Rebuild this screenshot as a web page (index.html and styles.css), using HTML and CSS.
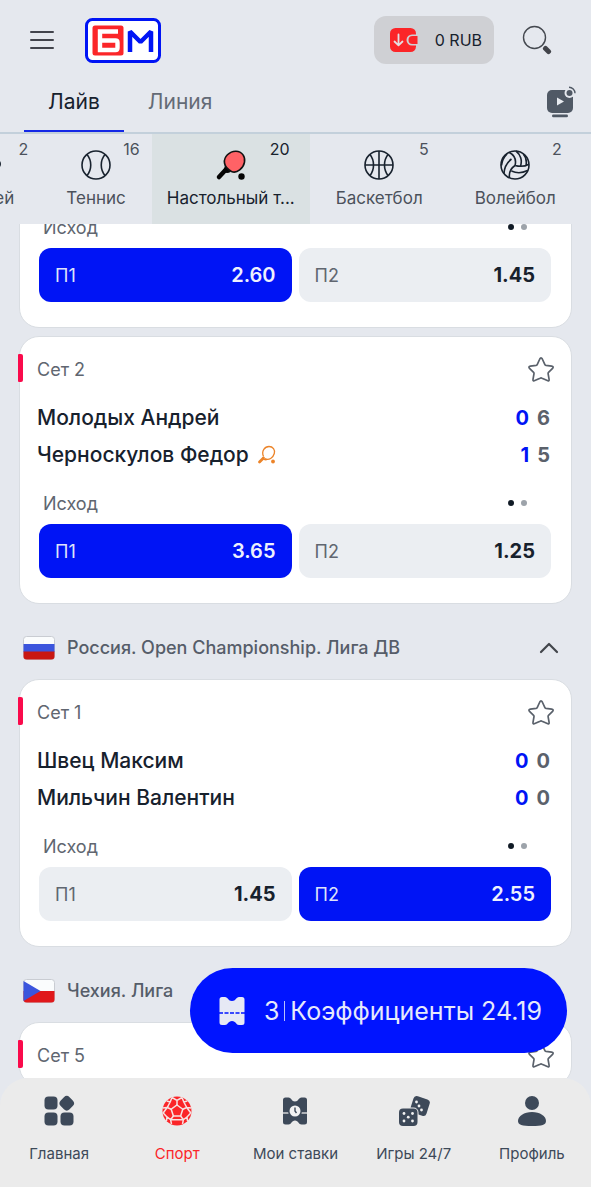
FILE: index.html
```html
<!DOCTYPE html>
<html lang="ru">
<head>
<meta charset="utf-8">
<meta name="viewport" content="width=device-width, initial-scale=1">
<title>Лайв</title>
<link rel="stylesheet" href="styles.css">
</head>
<body>
<svg class="sprite" aria-hidden="true">
  <symbol id="star" viewBox="0 0 28 28"><path d="M14 1.900c.7 0 1 .5 1.300 1.100l2.600 5.600c.2.500.6.7 1.100.8l5.700.7c1.500.2 1.900 1.200.9 2.200l-4.100 4c-.4.400-.5.8-.4 1.300l1 5.700c.2 1.500-.6 2-1.800 1.300l-5.300-2.400c-.6-.3-1.300-.3-1.900 0l-5.300 2.400c-1.200.7-2 .2-1.800-1.300l1-5.700c.1-.5 0-.9-.4-1.300l-4.100-4c-1-1-.6-2 .9-2.200l5.700-.7c.5-.1.900-.3 1.100-.8l2.600-5.600c.3-.6.6-1.100 1.200-1.100z" fill="none" stroke="#5a616b" stroke-width="1.700" stroke-linejoin="round"/></symbol>
</svg>
<div class="app">
  <header class="header">
    <div class="topbar">
      <button class="icon-button" aria-label="Меню">
        <svg width="26" height="20" viewBox="0 0 26 20"><path d="M2 2h22M2 10h22M2 18h22" stroke="#42444c" stroke-width="2" stroke-linecap="round"/></svg>
      </button>
      <a class="logo" href="#" aria-label="БМ">
        <svg width="76" height="45" viewBox="0 0 76 45">
          <rect x="1.500" y="1.500" width="73" height="42" rx="6" fill="#fff" stroke="#0014f5" stroke-width="3"/>
          <rect x="7.500" y="7.500" width="31" height="30" rx="2.500" fill="#fb2629"/>
          <path d="M33 13.500H15v18.500h15.500q2 0 2-2v-5.500q0-2-2-2H17" fill="none" stroke="#fff" stroke-width="4.400"/>
          <path d="M45 34V13.500L55.500 24 66 13.500V34" fill="none" stroke="#0014f5" stroke-width="4.500" stroke-linejoin="bevel"/>
        </svg>
      </a>
      <button class="balance">
        <svg width="28" height="26" viewBox="0 0 28 26">
          <rect x="0" y="1" width="26" height="24" rx="5.500" fill="#fb2528"/>
          <path d="M28 7.500h-6a5 5 0 0 0 0 11h6z" fill="#cfd0d4"/>
          <path d="M27.500 9h-5a4 4 0 0 0 0 8h5z" fill="#fb2528"/>
          <path d="M8.500 7.500v10.500M4.500 14.500l4 3.800 4-3.800" fill="none" stroke="#e3dfe3" stroke-width="1.800" stroke-linecap="round" stroke-linejoin="round"/>
        </svg>
        <span>0 RUB</span>
      </button>
      <button class="icon-button search" aria-label="Поиск">
        <svg width="30" height="30" viewBox="0 0 30 30"><circle cx="12.500" cy="12.500" r="11" fill="none" stroke="#454950" stroke-width="1.400"/><path d="M23.500 23.500l3 3" stroke="#42444a" stroke-width="5" stroke-linecap="round"/></svg>
      </button>
    </div>
    <nav class="tabs">
      <a class="tab tab-active" href="#">Лайв</a>
      <a class="tab" href="#">Линия</a>
      <button class="icon-button stream" aria-label="Трансляции">
        <svg width="30" height="32" viewBox="0 0 30 32">
          <rect x="1" y="4" width="26" height="23" rx="5" fill="#505965"/>
          <path d="M11 11.500l7 4-7 4z" fill="#e8ebf0"/>
          <rect x="6" y="28.500" width="16" height="2.800" rx="1.400" fill="#505965"/>
          <circle cx="23.500" cy="7" r="5" fill="#e5e8ee"/>
          <circle cx="23.500" cy="7" r="3" fill="#505965"/>
          <path d="M23 1.200a6 6 0 0 1 6 6" fill="none" stroke="#505965" stroke-width="1.400"/>
        </svg>
      </button>
    </nav>
  </header>

  <nav class="sports">
    <a class="sport sport-compact" href="#"><span class="count">2</span>
      <svg width="32" height="32" viewBox="0 0 32 32"><circle cx="27" cy="15" r="5" fill="#18222e"/></svg>
      <span>Хоккей</span></a>
    <a class="sport sport-compact" href="#"><span class="count">16</span>
      <svg width="32" height="32" viewBox="0 0 32 32"><g fill="none" stroke="#18222e" stroke-width="1.600"><circle cx="16" cy="16" r="14"/><path d="M7 5.500c5 6 5 15 0 21M25 5.500c-5 6-5 15 0 21"/></g></svg>
      <span>Теннис</span></a>
    <a class="sport sport-active" href="#"><span class="count">20</span>
      <svg width="32" height="32" viewBox="0 0 32 32"><path d="M4 28l7-7.500" stroke="#050505" stroke-width="4.500" stroke-linecap="round"/><path d="M10 15.500c0 4-2 4.500-1.500 6.500 1 2.300 4.500 2.300 7 1z" fill="#050505"/><path d="M9.500 14c-1-6 5-12 11.500-11.800 6 .2 9.500 5.300 8.500 11C28.500 19 22 25 16.500 22.500 12.500 20.500 10.200 18 9.500 14z" fill="#ff6266" stroke="#111" stroke-width="1.600"/><circle cx="26.500" cy="27.500" r="3.200" fill="#050505"/></svg>
      <span>Настольный т...</span></a>
    <a class="sport" href="#"><span class="count">5</span>
      <svg width="32" height="32" viewBox="0 0 32 32"><g fill="none" stroke="#18222e" stroke-width="1.600"><circle cx="16" cy="16" r="14"/><path d="M2 16h28M16 2v28M7 5.500c4.700 6 4.700 15 0 21M25 5.500c-4.700 6-4.700 15 0 21"/></g></svg>
      <span>Баскетбол</span></a>
    <a class="sport" href="#"><span class="count">2</span>
      <svg width="32" height="32" viewBox="0 0 32 32"><g fill="none" stroke="#18222e" stroke-width="1.600"><circle cx="16" cy="16" r="14"/><path d="M16 16.500C17.500 11 15 6 10 3.300M21.500 17c2-5.500 0-11.500-4.500-15M27 16.500c.8-4.500 0-8.500-2.700-11.500M16 16.500c5 1.300 10 1 13.800-1.300M12.500 22c5 2.300 11 2 16-.5M16 16.500c-4.500 3-6.200 7.500-5.500 12.300M12.500 10c-4.500 3.500-7.300 8.500-7.500 14.500M8 5c-3 3-5 7-5.500 11.500"/></g></svg>
      <span>Волейбол</span></a>
  </nav>

  <main class="feed">
    <article class="card card-scrolled">
      <section class="market">
        <div class="market-head"><h4>Исход</h4><span class="dots"><i></i><i></i></span></div>
        <div class="odds">
          <button class="odd odd-picked"><span>П1</span><b>2.60</b></button>
          <button class="odd"><span>П2</span><b>1.45</b></button>
        </div>
      </section>
    </article>

    <article class="card">
      <span class="live-mark"></span>
      <div class="card-head"><span>Сет 2</span><button class="icon-button" aria-label="В избранное"><svg width="28" height="28"><use href="#star"/></svg></button></div>
      <div class="players">
        <div class="player"><h3>Молодых Андрей</h3><span class="score"><b>0</b><b>6</b></span></div>
        <div class="player"><h3>Черноскулов Федор</h3>
          <svg width="20" height="20" viewBox="0 0 20 20"><path d="M2.500 17l4-4" stroke="#ec8429" stroke-width="2.800" stroke-linecap="round"/><path d="M5.500 12.500c1 2 2.500 2.500 4 2.300M6.500 11.500C4 6 8 1.500 12 1.500s6.300 3.500 5.300 7c-1.300 4.500-5.300 7-9.300 5.200" fill="none" stroke="#ec8429" stroke-width="1.300"/><circle cx="16" cy="16.500" r="1.900" fill="#ec8429"/></svg>
          <span class="score"><b>1</b><b>5</b></span></div>
      </div>
      <section class="market">
        <div class="market-head"><h4>Исход</h4><span class="dots"><i></i><i></i></span></div>
        <div class="odds">
          <button class="odd odd-picked"><span>П1</span><b>3.65</b></button>
          <button class="odd"><span>П2</span><b>1.25</b></button>
        </div>
      </section>
    </article>

    <header class="league">
      <svg width="32" height="24" viewBox="0 0 32 24"><rect x=".5" y=".5" width="31" height="23" rx="3" fill="#fafcfd" stroke="#c9ccd2"/><path d="M.5 8h31v8H.5z" fill="#3b55dd"/><path d="M.5 15.500h31v5q0 3-3 3h-25q-3 0-3-3z" fill="#c91712"/></svg>
      <h2>Россия. Open Championship. Лига ДВ</h2>
      <button class="icon-button" aria-label="Свернуть"><svg width="20" height="14" viewBox="0 0 20 14"><path d="M2 11l8-8 8 8" fill="none" stroke="#42454b" stroke-width="2.200" stroke-linecap="round" stroke-linejoin="round"/></svg></button>
    </header>

    <article class="card">
      <span class="live-mark"></span>
      <div class="card-head"><span>Сет 1</span><button class="icon-button" aria-label="В избранное"><svg width="28" height="28"><use href="#star"/></svg></button></div>
      <div class="players">
        <div class="player"><h3>Швец Максим</h3><span class="score"><b>0</b><b>0</b></span></div>
        <div class="player"><h3>Мильчин Валентин</h3><span class="score"><b>0</b><b>0</b></span></div>
      </div>
      <section class="market">
        <div class="market-head"><h4>Исход</h4><span class="dots"><i></i><i></i></span></div>
        <div class="odds">
          <button class="odd"><span>П1</span><b>1.45</b></button>
          <button class="odd odd-picked"><span>П2</span><b>2.55</b></button>
        </div>
      </section>
    </article>

    <header class="league">
      <svg width="32" height="24" viewBox="0 0 32 24"><rect x=".5" y=".5" width="31" height="23" rx="3" fill="#fafcfd" stroke="#c9ccd2"/><path d="M.5 12h31v8.500q0 3-3 3h-25q-3 0-3-3z" fill="#e0181b"/><path d="M.5 2l17 10-17 10z" fill="#3b55dd"/></svg>
      <h2>Чехия. Лига</h2>
    </header>

    <article class="card">
      <span class="live-mark"></span>
      <div class="card-head"><span>Сет 5</span><button class="icon-button" aria-label="В избранное"><svg width="28" height="28"><use href="#star"/></svg></button></div>
      <div class="players"></div>
    </article>
  </main>

  <footer class="bottom">
    <button class="betslip">
      <svg width="26" height="30" viewBox="0 0 26 30"><path d="M3 1h3c3 0 3 4 7 4s4-4 7-4h3q2.500 0 2.500 2.500v23q0 2.500-2.500 2.500h-3c-3 0-3-4-7-4s-4 4-7 4H3Q.5 29 .5 26.500v-23Q.5 1 3 1z" fill="#e6e9f5"/><path d="M0 17h26" stroke="#0014ff" stroke-width="1.400" stroke-dasharray="4 1.500"/></svg>
      <span class="betslip-text"><span>3</span><i></i><span>Коэффициенты 24.19</span></span>
    </button>
    <nav class="bottom-nav">
      <a class="nav-item" href="#">
        <svg width="32" height="32" viewBox="0 0 32 32" fill="#3d4959"><rect x="1.500" y="1.500" width="13" height="13" rx="4"/><rect x="1.500" y="17.500" width="13" height="13" rx="4"/><rect x="17.500" y="17.500" width="13" height="13" rx="4"/><rect x="17.500" y="2" width="12.500" height="12.500" rx="4" transform="rotate(45 23.750 8.250)"/></svg>
        <span>Главная</span></a>
      <a class="nav-item nav-active" href="#">
        <svg width="32" height="32" viewBox="0 0 32 32"><circle cx="16" cy="16" r="14.500" fill="#fb2528"/><g stroke="#f6e2e2" stroke-width="1.500" fill="none"><path d="M16 10l5.800 4.200-2.200 6.800h-7.200l-2.200-6.800z"/><path d="M16 10V5.500M21.800 14.200l4-1.700M19.600 21l2.800 3.700M12.400 21l-2.800 3.700M10.200 14.200l-4-1.700M11 2.500l5 3 5-3M21 2.500l1.800 4.500 3 5.500 4.500.5M22.800 7l3.500-1M29.800 18l-4-5.500M26.500 26l-.5-4 3.800-4M26 22l-3.600 2.700L21.500 29M22.400 24.700H9.600L10.500 29M9.600 24.700L6 22l-.5 4M6 22l-3.800-4 4-5.500-4.500.5M6.200 12.500l3-5.500L11 2.500M9.200 7L5.700 6"/></g></svg>
        <span>Спорт</span></a>
      <a class="nav-item" href="#">
        <svg width="32" height="32" viewBox="0 0 32 32"><path d="M6.500 2.500h3c3 0 3 4 6.500 4s3.500-4 6.500-4h3q2.500 0 2.500 2.500v22q0 2.500-2.500 2.500h-3c-3 0-3-4-6.500-4s-3.500 4-6.500 4h-3Q4 29.500 4 27V5q0-2.500 2.500-2.500z" fill="#3d4959"/><path d="M3 18h26" stroke="#ebebeb" stroke-width="1.300"/><circle cx="16" cy="16" r="7" fill="#3d4959"/><circle cx="16" cy="16" r="5.500" fill="#f2f2f2"/><path d="M16 12.500V16l1.500 2" stroke="#3d4959" stroke-width="1.400" fill="none"/></svg>
        <span>Мои ставки</span></a>
      <a class="nav-item" href="#">
        <svg width="32" height="32" viewBox="0 0 32 32"><rect x="13.500" y="2.500" width="17" height="17" rx="3.500" fill="#3d4959" transform="rotate(18 22 11)"/><g fill="#f2f2f2"><circle cx="18.500" cy="7" r="1.400"/><circle cx="21" cy="11" r="1.400"/><circle cx="23.500" cy="15" r="1.400"/></g><rect x="0" y="12.500" width="20.500" height="20" rx="5" fill="#ebebeb"/><rect x="1" y="13.500" width="18.500" height="17.500" rx="4" fill="#3d4959"/><g fill="#f2f2f2"><circle cx="6" cy="18.500" r="1.400"/><circle cx="14.500" cy="18.500" r="1.400"/><circle cx="10.250" cy="22.200" r="1.400"/><circle cx="6" cy="26" r="1.400"/><circle cx="14.500" cy="26" r="1.400"/></g></svg>
        <span>Игры 24/7</span></a>
      <a class="nav-item" href="#">
        <svg width="32" height="32" viewBox="0 0 32 32" fill="#3d4959"><circle cx="16" cy="8" r="7"/><path d="M16 17c8 0 14 4 14 9 0 4-4 5-14 5S2 30 2 26c0-5 6-9 14-9z"/></svg>
        <span>Профиль</span></a>
    </nav>
  </footer>
</div>
</body>
</html>
```
FILE: styles.css
```css
* { box-sizing: border-box; }

body {
  margin: 0;
  background: #e5e8ee;
  color: #17212d;
  font-family: Inter, "Noto Sans", sans-serif;
  font-size: 18px;
}

h2, h3, h4 { margin: 0; }
a { color: inherit; text-decoration: none; }
button { border: 0; padding: 0; color: inherit; font: inherit; cursor: pointer; }
svg { display: block; flex: none; }
.sprite { display: none; }
.icon-button { background: none; }

.app {
  display: flex;
  flex-direction: column;
  height: 100vh;
  overflow: hidden;
}

/* Header */
.header { border-bottom: 2px solid #c3d0db; }

.topbar {
  display: flex;
  align-items: center;
  height: 80px;
  padding: 0 39px 0 29px;
}

.logo { margin-left: 30px; }

.balance {
  display: flex;
  align-items: center;
  justify-content: space-between;
  gap: 17px;
  height: 48px;
  margin-left: auto;
  padding: 0 12px 0 16px;
  border-radius: 12px;
  background: #cfd0d4;
  font-size: 16px;
}

.search { margin-left: 28px; }

.tabs {
  display: flex;
  height: 52px;
  padding: 0 15px 0 24px;
}

.tab {
  padding: 8px 24px 0;
  border-bottom: 2px solid transparent;
  color: #646b76;
  font-size: 21px;
  line-height: 28px;
}

.tab-active { border-color: #1428e6; color: #17212d; }
.stream { margin: 6px 0 14px auto; }

/* Sport strip, scrolled to the selected sport */
.sports {
  display: flex;
  flex: none;
  height: 90px;
  margin-left: -71px;
}

.sport {
  position: relative;
  display: flex;
  flex: none;
  flex-direction: column;
  align-items: center;
  gap: 6px;
  padding: 15px 26px 0;
  color: #4b515b;
  font-size: 17px;
  line-height: 22px;
}

.sport-active { padding: 15px 15px 0; background: #dae1e3; color: #17212d; }
.count { position: absolute; top: 4px; right: 20px; font-size: 16px; }
.sport-compact .count { right: 12px; }

/* Events */
.feed {
  flex: 1;
  min-height: 0;
  padding: 0 19px;
  overflow: hidden;
}

.card {
  position: relative;
  border: 1px solid #d9dde2;
  border-radius: 20px;
  background: #fff;
}

.card + .card { margin-top: 8px; }
.card-scrolled { margin-top: -28px; }

.live-mark {
  position: absolute;
  top: 17px;
  left: -2px;
  width: 5px;
  height: 28px;
  border-radius: 1px 2px 2px 1px;
  background: #fa0a4b;
}

.card-head {
  display: flex;
  align-items: center;
  justify-content: space-between;
  height: 52px;
  padding: 13px 16px 0 17px;
  color: #606670;
}

.players { padding: 10px 21px 0 17px; }

.player {
  display: flex;
  align-items: center;
  gap: 8px;
  height: 37px;
}

.player h3 { font-size: 21px; font-weight: 500; }

.score {
  display: flex;
  gap: 8px;
  margin-left: auto;
  color: #5b616b;
  font-size: 20px;
}

.score b { font-weight: 700; }
.score b:first-child { color: #0014f5; }

.market { padding: 15px 20px 25px 19px; }

.market-head {
  display: flex;
  align-items: center;
  justify-content: space-between;
  height: 30px;
  padding: 0 24px 0 4px;
}

.market-head h4 { color: #606670; font-size: 18px; font-weight: 400; }
.dots { display: flex; gap: 7px; }
.dots i { width: 6px; height: 6px; border-radius: 50%; background: #9da3aa; }
.dots i:first-child { background: #101a25; }

.odds {
  display: grid;
  grid-template-columns: 1fr 1fr;
  gap: 7px;
  margin-top: 6px;
}

.odd {
  display: flex;
  align-items: center;
  justify-content: space-between;
  height: 54px;
  padding: 0 16px;
  border-radius: 12px;
  background: #ebeef2;
  color: #606670;
}

.odd b { color: #17212d; font-size: 20px; font-weight: 700; }
.odd-picked { background: #0014f5; color: #dfe3fa; }
.odd-picked b { color: #eef0fd; font-weight: 600; }

.league {
  display: flex;
  align-items: center;
  gap: 12px;
  height: 63px;
  margin-top: 12px;
  padding: 0 13px 0 4px;
}

.league h2 {
  flex: 1;
  color: #565d69;
  font-size: 18px;
  font-weight: 500;
}

/* Bottom bar with floating bet slip */
.bottom {
  position: relative;
  flex: none;
}

.betslip {
  position: absolute;
  right: 24px;
  bottom: 134px;
  display: flex;
  align-items: center;
  gap: 19px;
  height: 85px;
  padding: 0 25px 0 29px;
  border-radius: 43px;
  background: #0014ff;
  color: #e6e9fb;
  font-size: 25px;
  white-space: nowrap;
}

.betslip-text { display: flex; align-items: center; gap: 5px; }
.betslip-text i { width: 1px; height: 20px; background: #b9c0fb; }

.bottom-nav {
  display: grid;
  grid-template-columns: repeat(5, 1fr);
  height: 109px;
  border-radius: 28px 28px 0 0;
  background: #ebebeb;
}

.nav-item {
  display: flex;
  flex-direction: column;
  align-items: center;
  gap: 17px;
  padding-top: 17px;
  color: #3d4959;
  font-size: 15px;
  line-height: 20px;
}

.nav-active { color: #fb2528; }
```
